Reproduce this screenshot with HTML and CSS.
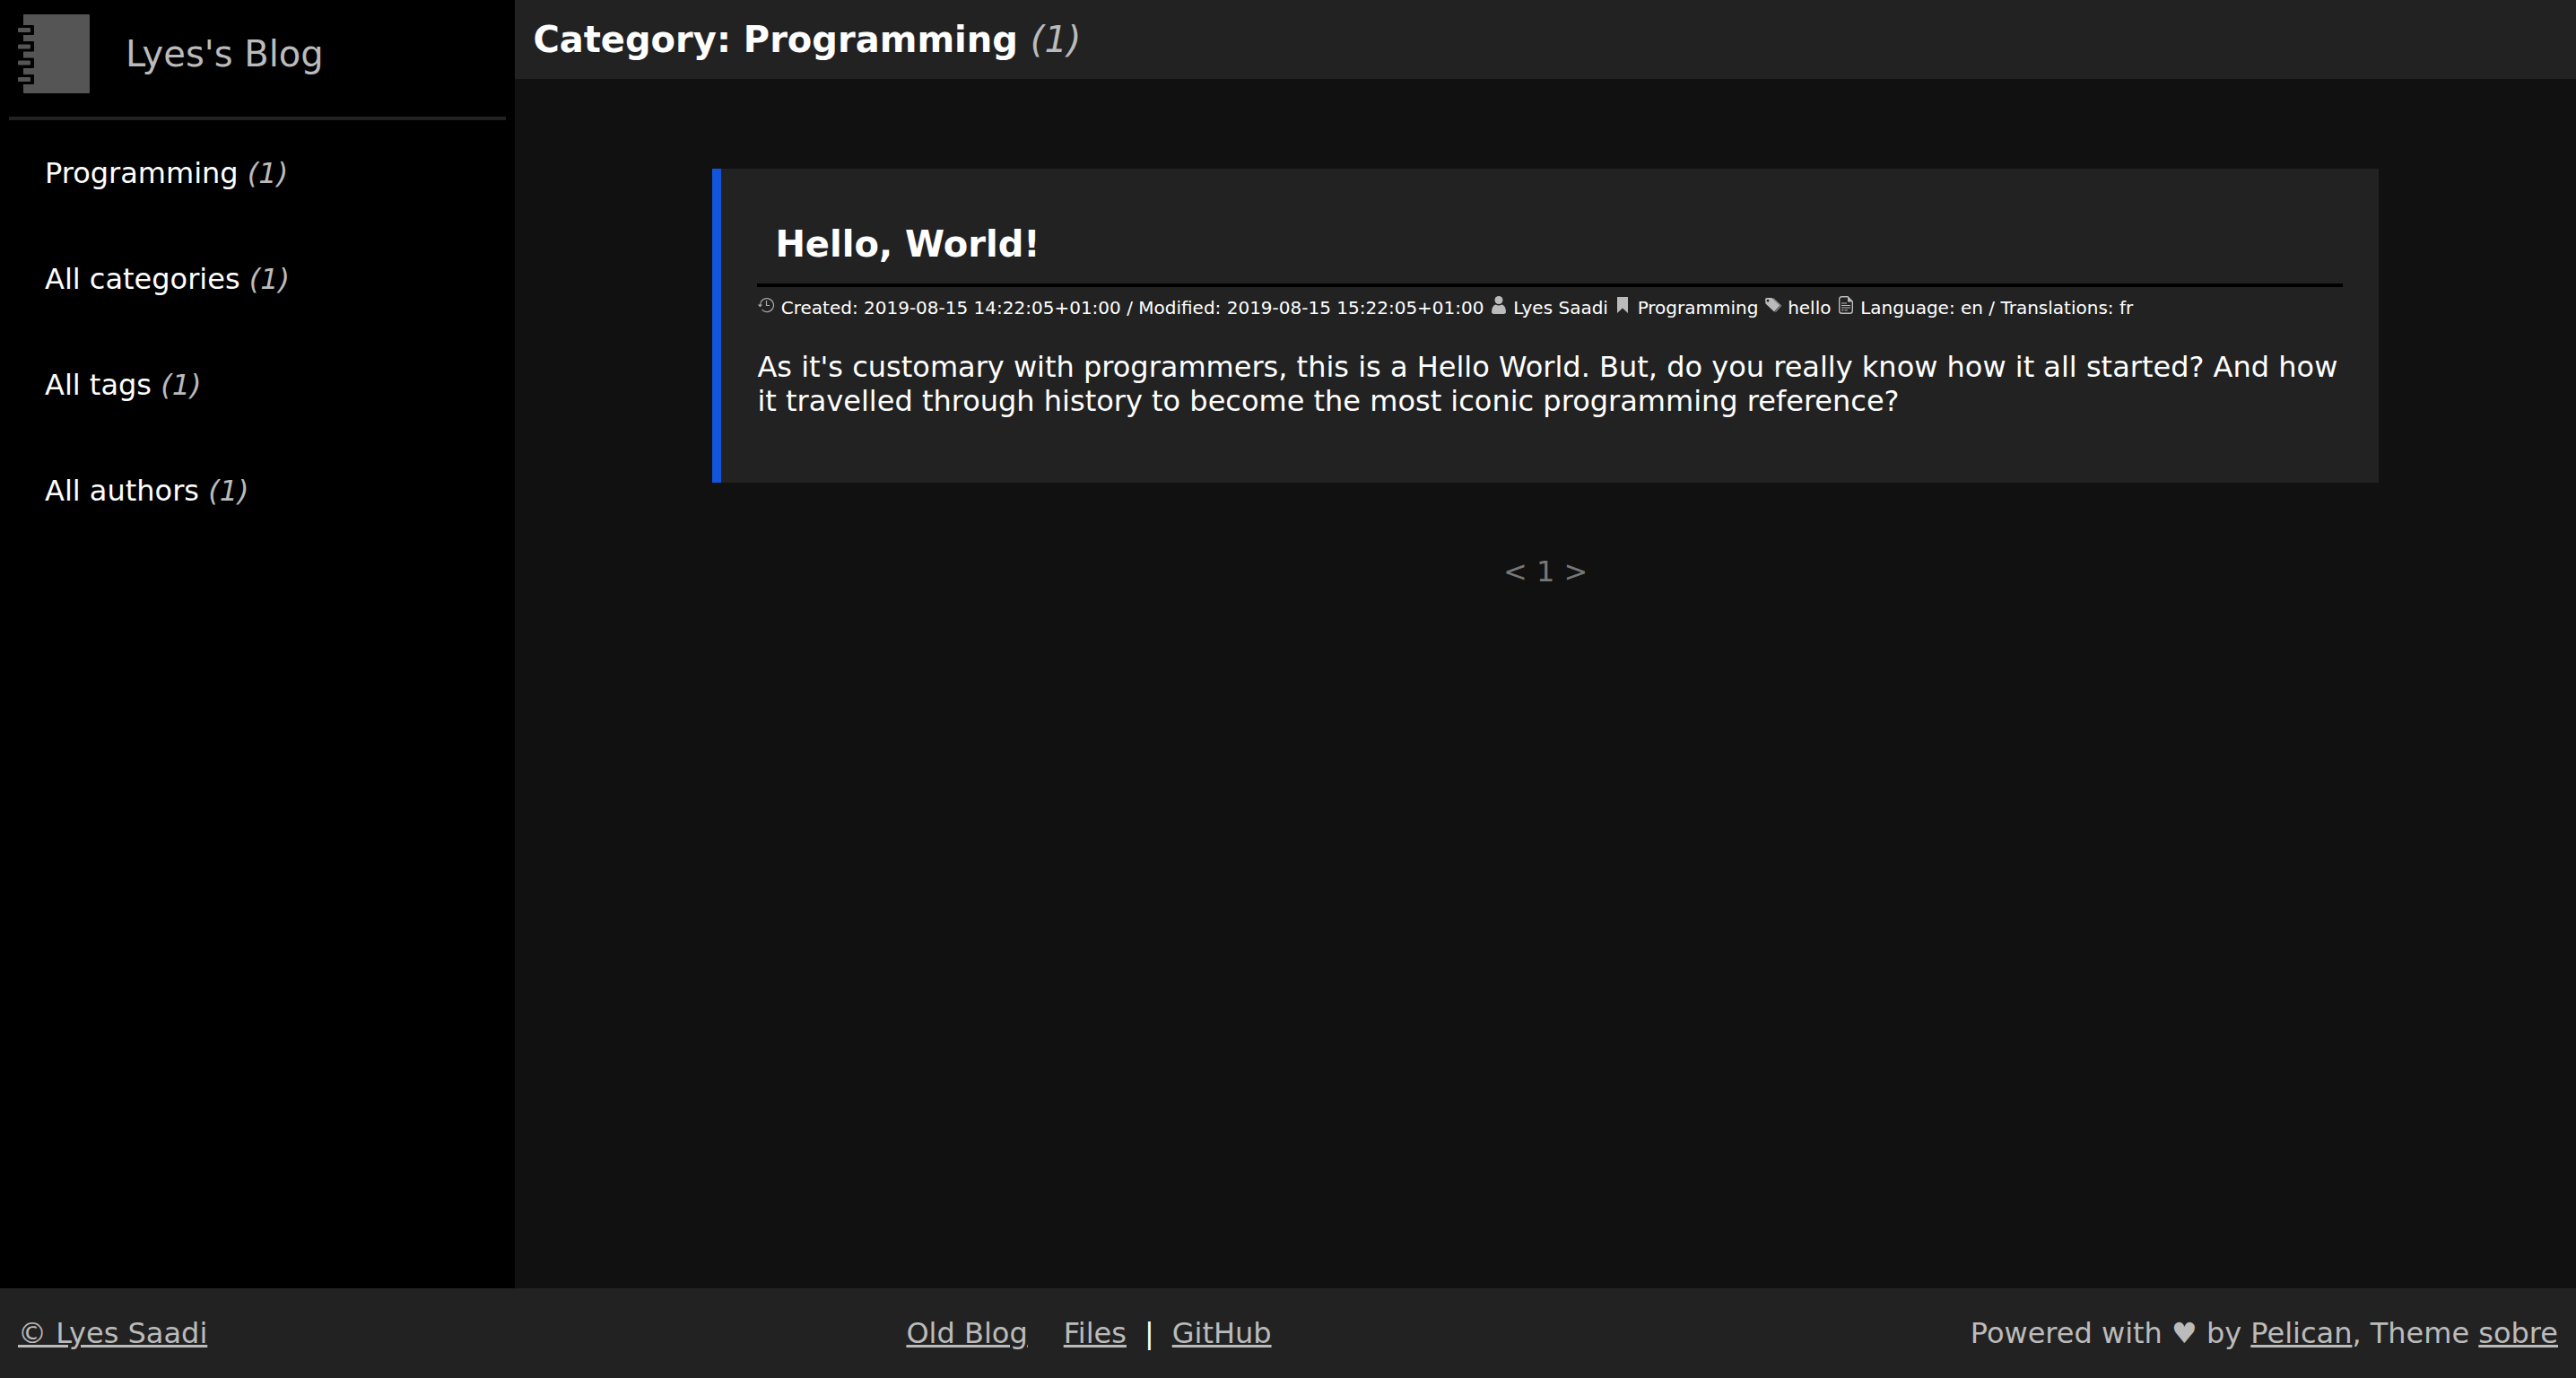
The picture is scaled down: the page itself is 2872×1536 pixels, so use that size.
FILE: index.html
```html
<!DOCTYPE html>
<html lang="en">
<head>
<meta charset="utf-8">
<meta name="viewport" content="width=device-width, initial-scale=1">
<title>Lyes's Blog - Programming</title>
<link rel="stylesheet" href="styles.css">
</head>
<body>
<div class="layout">
  <aside class="sidebar">
    <a class="brand" href="#">
      <svg class="brand-logo" viewBox="0 0 100 100" aria-hidden="true">
        <path d="M17 6H89Q90 6 90 7V93Q90 94 89 94H17Q16 94 16 93V84H27Q28 84 28 83V74Q28 73 27 73H16V66H27Q28 66 28 65V55.500Q28 54.500 27 54.500H16V47.500H27Q28 47.500 28 46.500V37Q28 36 27 36H16V29H27Q28 29 28 28V19Q28 18 27 18H16V7Q16 6 17 6Z"/>
        <rect x="10" y="21" width="14" height="5" rx="1"/>
        <rect x="10" y="39.500" width="14" height="5" rx="1"/>
        <rect x="10" y="57.500" width="14" height="5" rx="1"/>
        <rect x="10" y="76" width="14" height="5" rx="1"/>
      </svg>
      <span>Lyes's Blog</span>
    </a>
    <nav class="menu">
      <a href="#">Programming <em>(1)</em></a>
      <a href="#">All categories <em>(1)</em></a>
      <a href="#">All tags <em>(1)</em></a>
      <a href="#">All authors <em>(1)</em></a>
    </nav>
  </aside>
  <main class="content">
    <h1 class="page-title">Category: Programming <em>(1)</em></h1>
    <article class="card">
      <h2 class="card-title"><a href="#">Hello, World!</a></h2>
      <div class="meta"><small>
        <svg viewBox="0 0 20 20" aria-hidden="true"><path d="M3.500 10.500A7.500 7.500 0 1 1 5.500 15.200M10.500 5V10.500H14" fill="none" stroke="#aaa" stroke-width="1.200"/><path d="M.8 9.500H6L3.500 12.500Z" fill="#aaa"/></svg>
        Created: 2019-08-15 14:22:05+01:00 / Modified: 2019-08-15 15:22:05+01:00
        <svg viewBox="0 0 20 20" aria-hidden="true"><circle cx="10" cy="4.500" r="4.500"/><path d="M6.500 9.500Q10 11.500 13.500 9.500Q18 10.500 18 18.500Q17 20 15 20H5Q3 20 2 18.500Q2 10.500 6.500 9.500Z"/></svg>
        <a href="#">Lyes Saadi</a>
        <svg viewBox="0 0 20 20" aria-hidden="true"><path d="M4 1H16V19L10 13.500L4 19Z"/></svg>
        <a href="#">Programming</a>
        <svg viewBox="0 0 20 20" aria-hidden="true"><path fill-rule="evenodd" d="M1 4Q1 2 3 2H8.500L17.500 10.500L11 17.500L1.500 8.500ZM4 3.800A1.400 1.400 0 1 0 4 6.600A1.400 1.400 0 1 0 4 3.800Z"/><path d="M10 2.500L18.700 10.800L12.500 17.700" fill="none" stroke="#bbb"/></svg>
        <a href="#">hello</a>
        <svg viewBox="0 0 20 20" aria-hidden="true"><path d="M12 .7H5.500Q2.700 .7 2.700 3.500V16.500Q2.700 19.300 5.500 19.300H14.500Q17.300 19.300 17.300 16.500V6Z" fill="none" stroke="#bbb" stroke-width="1.400"/><path d="M12 .5L17.500 6.500H12Z"/><path d="M5 8H11M5 10.500H15M5 13H15M5 15.800H7.500M8.500 15.800H12" fill="none" stroke="#bbb"/></svg>
        Language: <a href="#">en</a> / Translations: <a href="#">fr</a>
      </small></div>
      <p class="summary">As it's customary with programmers, this is a Hello World. But, do you really know how it all started? And how it travelled through history to become the most iconic programming reference?</p>
    </article>
    <div class="pagination">&lt; 1 &gt;</div>
  </main>
</div>
<footer class="footer">
  <a href="#">© Lyes Saadi</a>
  <nav class="footer-links">
    <a href="#">Old Blog</a>
    <span class="footer-group"><a href="#">Files</a><span class="bar">|</span><a href="#">GitHub</a></span>
  </nav>
  <div>Powered with ♥ by <a href="#">Pelican</a>, Theme <a href="#">sobre</a></div>
</footer>
</body>
</html>
```
FILE: styles.css
```css
* {
  box-sizing: border-box;
}

body {
  display: flex;
  flex-direction: column;
  min-height: 100vh;
  margin: 0;
  background: #111;
  color: #fff;
  font-family: "DejaVu Sans", sans-serif;
  font-size: 32px;
  line-height: 38px;
}

a {
  color: inherit;
  text-decoration: none;
}

em {
  color: #bbb;
  font-weight: normal;
}

.layout {
  display: grid;
  grid-template-columns: 20% 1fr;
  flex: 1;
}

.sidebar {
  padding: 10px;
  background: #000;
}

.brand {
  display: flex;
  align-items: center;
  gap: 30px;
  padding-bottom: 20px;
  border-bottom: 4px solid #222;
  color: #bbb;
  font-size: 40px;
  line-height: 48px;
}

.brand-logo {
  width: 100px;
  height: 100px;
  fill: #555;
}

.menu {
  display: flex;
  flex-direction: column;
  gap: 80px;
  padding: 40px;
}

.page-title {
  margin: 0;
  padding: 20px;
  background: #222;
  font-size: 40px;
  line-height: 48px;
}

.card {
  margin: 100px 220px 80px;
  padding: 40px;
  border-left: 10px solid #15d;
  background: #222;
}

.card-title {
  margin: 0;
  padding: 20px;
  border-bottom: 4px solid #000;
  font-size: 40px;
  line-height: 48px;
}

.meta small {
  font-size: 20px;
  line-height: 20px;
}

.meta svg {
  width: 20px;
  height: 20px;
  fill: #bbb;
  vertical-align: baseline;
}

.summary {
  margin: 32px 0;
}

.pagination {
  color: #777;
  text-align: center;
}

.footer {
  display: flex;
  align-items: center;
  justify-content: space-between;
  padding: 31px 20px;
  background: #222;
  color: #bbb;
}

.footer a {
  text-decoration: underline;
}

.footer-links {
  display: flex;
  gap: 40px;
}

.footer-group {
  display: flex;
  gap: 20px;
}

.bar {
  color: #fff;
}
```
